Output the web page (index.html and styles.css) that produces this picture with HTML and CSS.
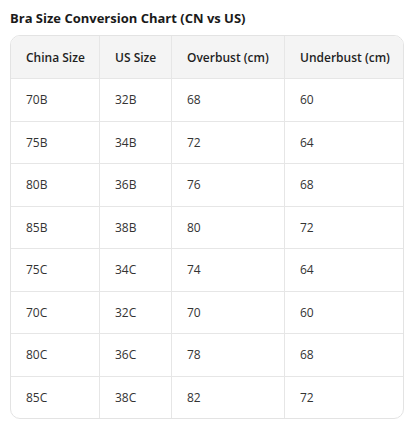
FILE: index.html
```html
<!DOCTYPE html>
<html>
<head>
<meta charset="utf-8">
<link rel="stylesheet" href="styles.css">
</head>
<body>
<div class="page">
  <h1 class="title">Bra Size Conversion Chart (CN vs US)</h1>
  <div class="card">
    <table class="chart">
      <thead>
        <tr><th class="c1">China Size</th><th class="c2">US Size</th><th class="c3">Overbust (cm)</th><th class="c4">Underbust (cm)</th></tr>
      </thead>
      <tbody>
        <tr><td>70B</td><td>32B</td><td>68</td><td>60</td></tr>
        <tr><td>75B</td><td>34B</td><td>72</td><td>64</td></tr>
        <tr><td>80B</td><td>36B</td><td>76</td><td>68</td></tr>
        <tr><td>85B</td><td>38B</td><td>80</td><td>72</td></tr>
        <tr><td>75C</td><td>34C</td><td>74</td><td>64</td></tr>
        <tr><td>70C</td><td>32C</td><td>70</td><td>60</td></tr>
        <tr><td>80C</td><td>36C</td><td>78</td><td>68</td></tr>
        <tr><td>85C</td><td>38C</td><td>82</td><td>72</td></tr>
      </tbody>
    </table>
  </div>
</div>
</body>
</html>
```
FILE: styles.css
```css
html, body { margin: 0; padding: 0; background: #ffffff; }
body { font-family: "Open Sans", "Noto Sans", sans-serif; color: #222; }
.page { padding: 10px 9px 0 10px; }
.title { margin: 0 0 9px 0; font-size: 13px; font-weight: 700; line-height: 16px; color: #1a1a1a; }
.card { width: 394px; border: 1px solid #e3e3e3; border-radius: 10px; overflow: hidden; box-sizing: border-box; }
.chart { width: 100%; border-collapse: collapse; table-layout: fixed; }
.chart th, .chart td { text-align: left; padding: 0 0 0 15px; font-size: 12px; border-right: 1px solid #e6e6e6; border-bottom: 1px solid #e6e6e6; white-space: nowrap; }
.chart th:last-child, .chart td:last-child { border-right: none; }
.chart tbody tr:last-child td { border-bottom: none; }
.chart th { background: #f4f4f4; height: 42px; font-weight: 600; color: #1f1f1f; }
.chart td { height: 41.5px; color: #333; }
.c1 { width: 73px; }
.c2 { width: 56px; }
.c3 { width: 97px; }
```
